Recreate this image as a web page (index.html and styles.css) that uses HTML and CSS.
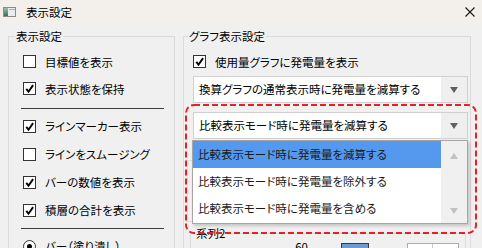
FILE: index.html
```html
<!DOCTYPE html>
<html lang="ja">
<head>
  <meta charset="UTF-8" />
  <title>表示設定</title>
  <link rel="stylesheet" href="styles.css">
</head>
<body>
<div class="window">

  <!-- TITLE BAR -->
  <div class="titlebar">
    <svg class="app-icon" viewBox="0 0 13 10">
      <defs>
        <linearGradient id="pane" x1="0" y1="0" x2="0" y2="1">
          <stop offset="0" stop-color="#9dbfae"/>
          <stop offset="1" stop-color="#3d6f58"/>
        </linearGradient>
      </defs>
      <rect x="0.5" y="0.5" width="12" height="9" fill="#e8edf2" stroke="#8c8c8c"/>
      <rect x="1" y="1" width="4" height="8" fill="url(#pane)"/>
      <rect x="6" y="2" width="6" height="1" fill="#9fb4c8"/>
    </svg>
    <span class="title">表示設定</span>
    <svg class="close" viewBox="0 0 10 10">
      <path d="M0.5 0.5 L9.5 9.5 M9.5 0.5 L0.5 9.5" stroke="#1a1a1a" stroke-width="1.1" fill="none"/>
    </svg>
  </div>

  <div class="panes">

    <!-- LEFT GROUP -->
    <fieldset class="group group-left">
      <legend>表示設定</legend>
      <div class="group-body">
        <label class="check"><span class="box"></span>目標値を表示</label>
        <label class="check"><span class="box"><svg viewBox="0 0 11 11"><path d="M2.3 5.9 L4.5 8.7 L9.1 2.1"/></svg></span>表示状態を保持</label>
        <hr class="sep">
        <label class="check tall"><span class="box"><svg viewBox="0 0 11 11"><path d="M2.3 5.9 L4.5 8.7 L9.1 2.1"/></svg></span>ラインマーカー表示</label>
        <label class="check tall"><span class="box"></span>ラインをスムージング</label>
        <label class="check tall"><span class="box"><svg viewBox="0 0 11 11"><path d="M2.3 5.9 L4.5 8.7 L9.1 2.1"/></svg></span>バーの数値を表示</label>
        <label class="check tall"><span class="box"><svg viewBox="0 0 11 11"><path d="M2.3 5.9 L4.5 8.7 L9.1 2.1"/></svg></span>積層の合計を表示</label>
        <hr class="sep sep-low">
        <label class="check tall"><span class="radio"><span class="dot"></span></span>バー（塗り潰し）</label>
      </div>
    </fieldset>

    <!-- RIGHT GROUP -->
    <fieldset class="group group-right">
      <legend>グラフ表示設定</legend>
      <div class="group-body">
        <label class="check"><span class="box"><svg viewBox="0 0 11 11"><path d="M2.3 5.9 L4.5 8.7 L9.1 2.1"/></svg></span>使用量グラフに発電量を表示</label>
        <div class="combo">
          <span class="combo-text">換算グラフの通常表示時に発電量を減算する</span>
          <span class="combo-btn"><svg viewBox="0 0 8 6"><path d="M0 0 H8 L4 6 Z"/></svg></span>
        </div>
        <div class="combo combo-second">
          <span class="combo-text">比較表示モード時に発電量を減算する</span>
          <span class="combo-btn"><svg viewBox="0 0 8 6"><path d="M0 0 H8 L4 6 Z"/></svg></span>
        </div>
        <div class="subgroup series-one"></div>
        <fieldset class="subgroup series-two">
          <legend>系列2</legend>
          <div class="series-row">
            <span class="series-value">60</span>
            <span class="swatch"></span>
            <span class="spin"><span class="spin-left"></span></span>
          </div>
        </fieldset>
      </div>
    </fieldset>

  </div>

  <!-- OPEN DROPDOWN LIST -->
  <div class="dropdown-list">
    <div class="list-items">
      <div class="list-item selected">比較表示モード時に発電量を減算する</div>
      <div class="list-item">比較表示モード時に発電量を除外する</div>
      <div class="list-item">比較表示モード時に発電量を含める</div>
    </div>
    <div class="list-scroll">
      <svg viewBox="0 0 8 6"><path d="M0 6 H8 L4 0 Z"/></svg>
      <svg viewBox="0 0 8 6"><path d="M0 0 H8 L4 6 Z"/></svg>
    </div>
  </div>

  <!-- HIGHLIGHT MARK -->
  <svg class="highlight" viewBox="0 0 292 130">
    <rect x="1" y="1" width="290" height="128" rx="8" ry="8"/>
  </svg>

</div>
</body>
</html>
```

FILE: styles.css
```css
* {
  box-sizing: border-box;
}

body {
  margin: 0;
  background: #f0f0f0;
  color: #000;
  font-family: "Noto Sans CJK JP", "Noto Sans", sans-serif;
  font-size: 11.5px;
  font-feature-settings: "palt";
}

.window {
  position: relative;
  width: 482px;
  height: 248px;
  overflow: hidden;
}

/* title bar */
.titlebar {
  height: 24px;
  background: #f3f0eb;
  display: flex;
  align-items: center;
}

.app-icon {
  width: 13px;
  height: 10px;
  margin-left: 3px;
}

.title {
  margin-left: 10px;
  line-height: 16px;
}

.close {
  width: 10px;
  height: 10px;
  margin-left: auto;
  margin-right: 7px;
}

/* groups */
.panes {
  display: flex;
  gap: 8px;
  padding: 4px 0 0 8px;
}

.group {
  margin: 0;
  padding: 0;
  min-width: 0;
  border: 1px solid #dcdcdc;
  height: 240px;
}

.group legend,
.subgroup legend {
  padding: 0 1px;
  margin-left: 6px;
  line-height: 16px;
}

.group-right legend {
  margin-left: 4px;
}

.group-left {
  width: 167px;
}

.group-right {
  width: 288px;
}

.group-left .group-body {
  padding: 4px 0 0 14px;
}

.group-right .group-body {
  padding: 4px 0 0 9px;
}

/* checkboxes */
.check {
  display: flex;
  align-items: center;
  height: 27px;
  line-height: 16px;
  white-space: nowrap;
}

.check.tall {
  height: 28px;
}

.box {
  flex: none;
  width: 13px;
  height: 13px;
  margin-right: 9px;
  border: 1px solid #333;
  background: #fff;
}

.box svg {
  display: block;
  width: 11px;
  height: 11px;
}

.box path {
  fill: none;
  stroke: #000;
  stroke-width: 1.9;
}

.radio {
  flex: none;
  width: 13px;
  height: 13px;
  margin-right: 9px;
  border: 1px solid #333;
  border-radius: 50%;
  background: #fff;
  display: flex;
  align-items: center;
  justify-content: center;
}

.dot {
  width: 5px;
  height: 5px;
  border-radius: 50%;
  background: #000;
}

.sep {
  height: 0;
  border: 0;
  border-top: 1px solid #3c3c3c;
  margin: 6px 10px 3px -2px;
}

.sep-low {
  margin-top: 4px;
}

/* combo boxes */
.combo {
  display: flex;
  width: 275px;
  height: 27px;
  margin-top: 1px;
  border: 1px solid #d0d0d0;
  background: #fff;
}

.combo-second {
  margin-top: 9px;
}

.combo-text {
  flex: 1;
  padding-left: 5px;
  line-height: 25px;
  white-space: nowrap;
}

.combo-btn {
  width: 26px;
  background: #efefef;
  display: flex;
  align-items: center;
  justify-content: center;
}

.combo-btn svg {
  width: 8px;
  height: 6px;
  fill: #606060;
}

/* series groups */
.subgroup {
  margin: 0;
  padding: 0;
  min-width: 0;
  border: 1px solid #dcdcdc;
}

.series-one {
  width: 279px;
  height: 62px;
  margin: 21px 0 0 -6px;
}

.series-two {
  width: 276px;
  height: 40px;
  margin: 3px 0 0 -3px;
}

.series-row {
  display: flex;
  align-items: flex-start;
  padding-top: 2px;
}

.series-value {
  width: 117px;
  margin-top: -4px;
  text-align: right;
  line-height: 16px;
}

.swatch {
  width: 28px;
  height: 18px;
  margin-left: 33px;
  background: #6b9bd0;
  border: 1px solid #3a3a3a;
}

.spin {
  display: flex;
  width: 52px;
  height: 20px;
  margin-left: 38px;
  background: #fff;
  border: 1px solid #adadad;
}

.spin-left {
  width: 25px;
  border-right: 1px solid #c8c8c8;
}

/* open dropdown */
.dropdown-list {
  position: absolute;
  left: 192px;
  top: 140px;
  width: 276px;
  height: 84px;
  display: flex;
  background: #fff;
  border: 1px solid #a6a6a6;
  box-shadow: 2px 2px 3px rgba(0, 0, 0, 0.18);
}

.list-items {
  flex: 1;
}

.list-item {
  height: 27px;
  padding-left: 5px;
  line-height: 27px;
  white-space: nowrap;
  color: #1a1a1a;
}

.list-item.selected {
  background: #5599ee;
}

.list-scroll {
  width: 26px;
  background: #f0f0f0;
  display: flex;
  flex-direction: column;
  align-items: center;
  justify-content: space-between;
  padding: 12px 0 9px;
}

.list-scroll svg {
  width: 8px;
  height: 6px;
  fill: #c2c2c2;
}

.highlight {
  position: absolute;
  left: 185px;
  top: 104px;
  width: 292px;
  height: 130px;
}

.highlight rect {
  fill: none;
  stroke: #e5202a;
  stroke-width: 2;
  stroke-dasharray: 6 3;
}
```
